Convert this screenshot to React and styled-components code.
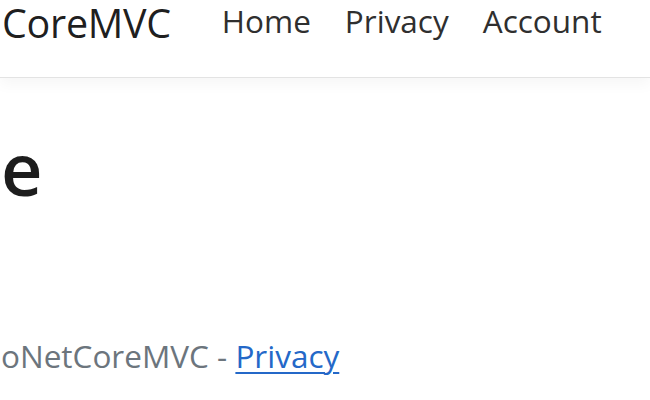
import React from "react";
import styled, { createGlobalStyle } from "styled-components";

const GlobalStyle = createGlobalStyle`
  html, body {
    margin: 0;
    padding: 0;
    background: #ffffff;
  }
  body {
    font-family: "Open Sans", "Noto Sans", sans-serif;
    color: #212529;
    overflow: hidden;
  }
`;

const Page = styled.div`
  width: 650px;
  height: 400px;
  display: flex;
  flex-direction: column;
  overflow: hidden;
`;

const Navbar = styled.header`
  height: 77px;
  display: flex;
  align-items: flex-start;
  padding-left: 2px;
  border-bottom: 1px solid #e3e3e3;
  box-shadow: 0 6px 14px rgba(0, 0, 0, 0.04);
  position: relative;
  z-index: 1;
`;

const Brand = styled.a`
  font-size: 39.5px;
  line-height: 1;
  color: rgba(0, 0, 0, 0.88);
  text-decoration: none;
  margin-top: 4px;
  margin-right: 51px;
  letter-spacing: -0.3px;
`;

const NavList = styled.nav`
  display: flex;
  gap: 34px;
  margin-top: 5px;
`;

const NavLink = styled.a`
  font-size: 31.5px;
  line-height: 1;
  color: #2f2f2f;
  text-decoration: none;
`;

const Main = styled.main`
  flex: 1;
  padding: 54px 0 0 1px;
`;

const Title = styled.h1`
  margin: 0;
  font-size: 72px;
  font-weight: 600;
  line-height: 1;
  color: #1d1d1d;
  letter-spacing: -2px;
`;

const Footer = styled.footer`
  padding: 0 0 29px 1px;
  font-size: 31.5px;
  line-height: 1;
  color: #6c757d;
`;

const FooterLink = styled.a`
  color: #2468c8;
  text-decoration: underline;
  text-underline-offset: 4px;
  text-decoration-thickness: 2px;
`;

export default function App() {
  return (
    <>
      <GlobalStyle />
      <Page>
        <Navbar>
          <Brand href="#">CoreMVC</Brand>
          <NavList>
            <NavLink href="#">Home</NavLink>
            <NavLink href="#">Privacy</NavLink>
            <NavLink href="#">Account</NavLink>
          </NavList>
        </Navbar>
        <Main>
          <Title>e</Title>
        </Main>
        <Footer>
          oNetCoreMVC - <FooterLink href="#">Privacy</FooterLink>
        </Footer>
      </Page>
    </>
  );
}
